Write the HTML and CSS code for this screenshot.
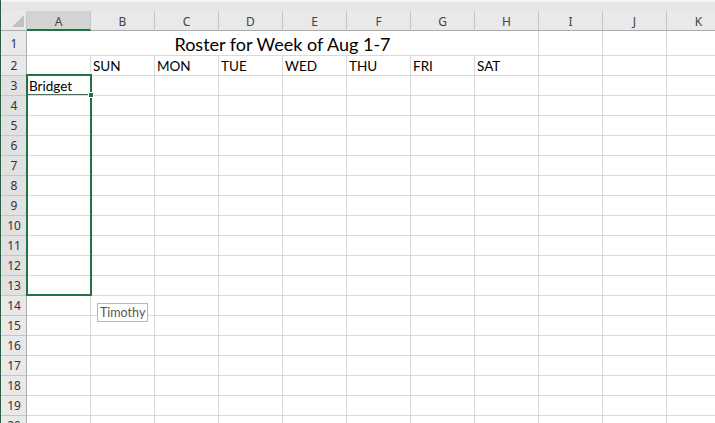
FILE: index.html
```html
<!DOCTYPE html>
<html lang="en">
<head>
  <meta charset="UTF-8">
  <title>Roster for Week of Aug 1-7</title>
  <link rel="stylesheet" href="styles.css">
</head>
<body>

  <div class="topbar"></div>

  <div class="wrap">
    <div id="sheet" class="sheet"></div>

    <!-- selection A3:A13 -->
    <div class="selection"></div>
    <div class="active-line"></div>
    <div class="fill-handle"></div>

    <!-- autocomplete tip -->
    <div class="tip">Timothy</div>
  </div>

  <script>
    const cols = ['A','B','C','D','E','F','G','H','I','J','K'],
          sheet = document.getElementById('sheet');

    const values = {
      B2: 'SUN', C2: 'MON', D2: 'TUE', E2: 'WED',
      F2: 'THU', G2: 'FRI', H2: 'SAT',
      A3: 'Bridget'
    };

    function add(cls, text) {
      const div = document.createElement('div');
      div.className = cls;
      div.textContent = text || '';
      sheet.appendChild(div);
      return div;
    }

    add('corner').innerHTML = '<span class="tri"></span>';
    cols.forEach(c => add('colhead' + (c === 'A' ? ' selected' : ''), c));

    for (let r = 1; r <= 20; r++) {
      add('rowhead' + (r >= 3 && r <= 13 ? ' selected' : ''), r);
      if (r === 1) {
        add('cell title', 'Roster for Week of Aug 1-7');
        ['I','J','K'].forEach(() => add('cell'));
        continue;
      }
      cols.forEach(c => add('cell', values[c + r]));
    }
  </script>

</body>
</html>
```

FILE: styles.css
```css
:root {
  --grid: #d9d9d9;
  --head-bg: #e9e9e9;
  --head-line: #c6c6c6;
  --green: #217346;
}
* { box-sizing: border-box; }
body {
  margin: 0;
  overflow: hidden;
  background: #fff;
  font-family: Lato, "Open Sans", sans-serif;
  color: #000;
  border-left: 1px solid #2c5e44;
}
.topbar {
  height: 11px;
  background: #e6e6e6;
  border-top: 2px solid #f3f3f3;
}
.wrap { position: relative; }
.sheet {
  display: grid;
  grid-template-columns: 26px repeat(11, 64px);
  grid-template-rows: 20px 25px repeat(19, 20px);
  width: max-content;
}
.corner {
  background: var(--head-bg);
  border-right: 1px solid var(--head-line);
  border-bottom: 1px solid #ababab;
  position: relative;
}
.corner .tri {
  position: absolute;
  right: 2px;
  bottom: 3px;
  width: 12px;
  height: 12px;
  background: #c2c2c2;
  clip-path: polygon(100% 0, 100% 100%, 0 100%);
}
.colhead {
  background: var(--head-bg);
  border-right: 1px solid var(--head-line);
  border-bottom: 1px solid #ababab;
  color: #444;
  font-family: "Noto Sans", sans-serif;
  font-size: 12px;
  display: flex;
  align-items: center;
  justify-content: center;
  padding-top: 1px;
}
.colhead.selected {
  background: #d3d3d3;
  border-bottom: 2px solid var(--green);
  padding-top: 2px;
}
.rowhead {
  background: var(--head-bg);
  border-right: 1px solid #ababab;
  border-bottom: 1px solid var(--head-line);
  color: #333;
  font-family: "Noto Sans", sans-serif;
  font-size: 12px;
  display: flex;
  align-items: center;
  justify-content: center;
  padding-left: 1px;
}
.rowhead.selected { background: #e1e1e1; }
.cell {
  border-right: 1px solid var(--grid);
  border-bottom: 1px solid var(--grid);
  font-size: 13.5px;
  line-height: 19px;
  padding: 1px 0 0 2px;
  white-space: nowrap;
  overflow: hidden;
}
.cell.title {
  grid-column: span 8;
  text-align: center;
  font-size: 18px;
  line-height: 26px;
  padding: 0;
}
.selection {
  position: absolute;
  left: 25px;
  top: 63px;
  width: 66px;
  height: 222px;
  border: 2px solid var(--green);
  pointer-events: none;
}
.active-line {
  position: absolute;
  left: 27px;
  top: 83px;
  width: 62px;
  height: 1px;
  background: #50705c;
}
.fill-handle {
  position: absolute;
  left: 87px;
  top: 81px;
  width: 6px;
  height: 6px;
  background: var(--green);
  border: 1px solid #fff;
}
.tip {
  position: absolute;
  left: 96px;
  top: 292px;
  height: 19px;
  padding: 0 2px;
  background: #fff;
  border: 1px solid #b8b8b8;
  color: #555;
  font-size: 12.5px;
  line-height: 17px;
}
```
